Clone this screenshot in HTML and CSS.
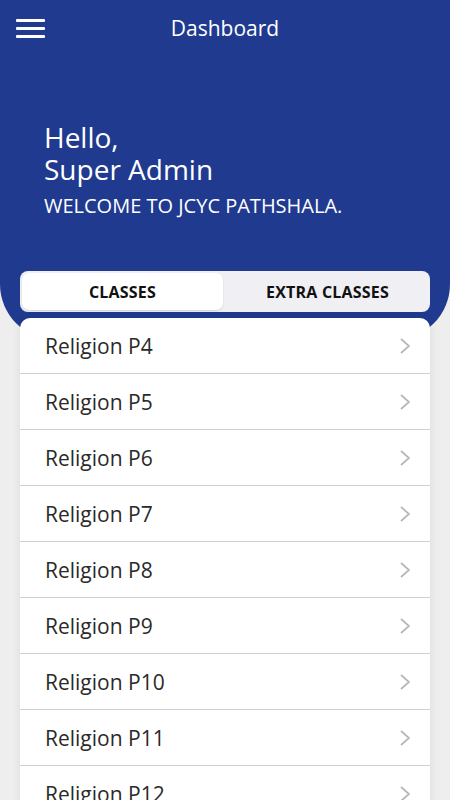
FILE: index.html
```html
<!DOCTYPE html>
<html>
<head>
    <meta charset="UTF-8">
    <title>Dashboard</title>
    <link rel="stylesheet" href="styles.css">
</head>
<body>
    <div class="header">
        <div class="topbar">
            <div class="menu-btn">
                <span></span><span></span><span></span>
            </div>
            <div class="title">Dashboard</div>
        </div>
        <div class="greeting">
            <div class="hello">Hello,<br>Super Admin</div>
            <div class="welcome">WELCOME TO JCYC PATHSHALA.</div>
        </div>
        <div class="tabs">
            <div class="tab active">CLASSES</div>
            <div class="tab">EXTRA CLASSES</div>
        </div>
    </div>

    <div class="list">
        <div class="row"><span>Religion P4</span><svg class="chev" viewBox="0 0 10 16"><path d="M1 1l8 7-8 7"/></svg></div>
        <div class="row"><span>Religion P5</span><svg class="chev" viewBox="0 0 10 16"><path d="M1 1l8 7-8 7"/></svg></div>
        <div class="row"><span>Religion P6</span><svg class="chev" viewBox="0 0 10 16"><path d="M1 1l8 7-8 7"/></svg></div>
        <div class="row"><span>Religion P7</span><svg class="chev" viewBox="0 0 10 16"><path d="M1 1l8 7-8 7"/></svg></div>
        <div class="row"><span>Religion P8</span><svg class="chev" viewBox="0 0 10 16"><path d="M1 1l8 7-8 7"/></svg></div>
        <div class="row"><span>Religion P9</span><svg class="chev" viewBox="0 0 10 16"><path d="M1 1l8 7-8 7"/></svg></div>
        <div class="row"><span>Religion P10</span><svg class="chev" viewBox="0 0 10 16"><path d="M1 1l8 7-8 7"/></svg></div>
        <div class="row"><span>Religion P11</span><svg class="chev" viewBox="0 0 10 16"><path d="M1 1l8 7-8 7"/></svg></div>
        <div class="row"><span>Religion P12</span><svg class="chev" viewBox="0 0 10 16"><path d="M1 1l8 7-8 7"/></svg></div>
    </div>
</body>
</html>
```

FILE: styles.css
```css
body {
  margin: 0;
  background-color: #eeeeee;
  font-family: "Open Sans", "Noto Sans", sans-serif;
  overflow: hidden;
}

.header {
  background-color: #1f3a8f;
  height: 340px;
  border-radius: 0 0 56px 56px;
  box-sizing: border-box;
  color: white;
}

.topbar {
  height: 56px;
  display: flex;
  align-items: center;
  justify-content: center;
  position: relative;
}

.menu-btn {
  position: absolute;
  left: 16px;
  top: 19px;
  width: 29px;
  display: flex;
  flex-direction: column;
  gap: 5px;
}

.menu-btn span {
  display: block;
  height: 3px;
  background-color: white;
  border-radius: 1px;
}

.title {
  font-size: 21px;
  font-weight: 500;
}

.greeting {
  margin-top: 65px;
  padding-left: 44px;
}

.hello {
  font-size: 28px;
  line-height: 32px;
}

.welcome {
  margin-top: 7px;
  font-size: 20px;
  line-height: 28px;
}

.tabs {
  margin: 51px 20px 0;
  height: 41px;
  padding: 2px;
  box-sizing: border-box;
  background-color: #efeff4;
  border-radius: 8px;
  display: flex;
}

.tab {
  flex: 1;
  display: flex;
  align-items: center;
  justify-content: center;
  color: #111;
  font-size: 16px;
  font-weight: 700;
  letter-spacing: 0.2px;
}

.tab.active {
  background-color: white;
  border-radius: 7px;
  margin-right: 4px;
  box-shadow: 0 1px 2px rgba(0, 0, 0, 0.12);
}

.list {
  margin: -22px 20px 0;
  background-color: white;
  border-radius: 10px 10px 0 0;
  box-shadow: 0 0 10px rgba(0, 0, 0, 0.08);
}

.row {
  height: 56px;
  box-sizing: border-box;
  border-bottom: 1px solid #d0d0d4;
  display: flex;
  align-items: center;
  justify-content: space-between;
  padding: 0 20px 0 25px;
  font-size: 21px;
  color: #2a2a2a;
}

.chev {
  width: 10px;
  height: 16px;
  fill: none;
  stroke: #b8b8b8;
  stroke-width: 1.8;
}
```
